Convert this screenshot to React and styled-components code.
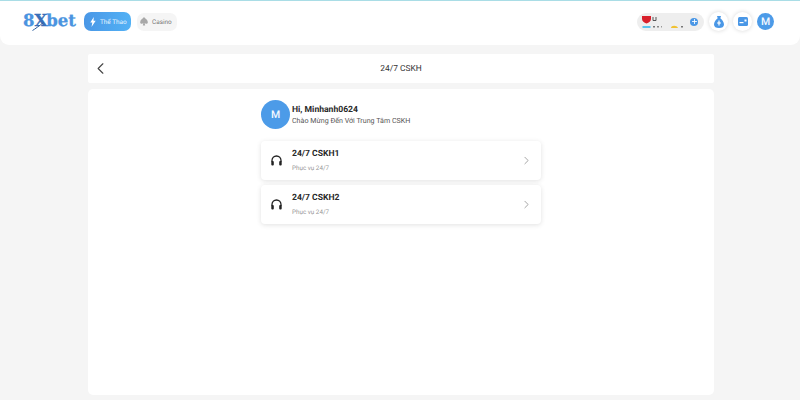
import React from "react";
import styled, { createGlobalStyle } from "styled-components";
import { ChevronLeft, ChevronRight, Plus } from "lucide-react";

const Global = createGlobalStyle`
  html, body { margin: 0; padding: 0; background: #f5f5f5; }
  body { font-family: Roboto, "Liberation Sans", Arial, sans-serif; color: #222; text-rendering: geometricPrecision; }
  * { box-sizing: border-box; }
`;
const Page = styled.div`
  width: 800px; height: 400px; overflow: hidden; display: flex; flex-direction: column;
`;
const Header = styled.header`
  height: 45px; flex: none; background: #fff; border-top: 1px solid #a9dde6;
  border-radius: 0 0 9px 9px; display: flex; align-items: center; justify-content: space-between;
  padding: 0 26px 3px 23px;
`;
const Left = styled.div`display: flex; align-items: center;`;
const Right = styled.div`display: flex; align-items: center; gap: 5px;`;
const Logo = styled.div`
  font-family: "DejaVu Serif", serif; font-weight: 700; font-size: 16.5px;
  -webkit-text-stroke: 0.3px currentColor;
  color: #4a94e0; width: 61px; display: flex; align-items: center; line-height: 1; position: relative;
`;
const LogoX = styled.span`color: #3a6fb8; font-size: 16.5px; margin: 0 -1px 0 0;`;
const Swoosh = styled.svg`position: absolute; left: 9px; top: 9px;`;
const Tab = styled.div`
  display: flex; align-items: center; flex: none; font-size: 6.4px; border-radius: 7px;
  gap: ${p => (p.$active ? "4px" : "4px")};
  padding: ${p => (p.$active ? "0 0 0 6px" : "0 0 0 3px")};
  width: ${p => (p.$active ? "47px" : "40px")}; margin-right: 6px; height: ${p => (p.$active ? "19px" : "18px")};
  background: ${p => (p.$active ? "linear-gradient(90deg,#4a97e6,#52b1f5)" : "#f5f5f5")};
  color: ${p => (p.$active ? "#e6f4ff" : "#777")}; white-space: nowrap;
  svg { flex: none; }
`;
const Wallet = styled.div`
  width: 67px; height: 18px; border-radius: 9px; background: #eeeeee;
  display: flex; align-items: center; justify-content: space-between; padding: 0 6px 0 5px;
`;
const CircleBtn = styled.div`
  width: 19px; height: 19px; border-radius: 50%; background: #fff; box-shadow: 0 0 4px rgba(0,0,0,.16);
  display: flex; align-items: center; justify-content: center;
`;
const PlusBtn = styled.div`
  width: 8px; height: 8px; border-radius: 50%; background: #4a97e6; color: #fff;
  display: flex; align-items: center; justify-content: center;
`;
const Avatar = styled.div`
  width: ${p => p.$size}px; height: ${p => p.$size}px; border-radius: 50%; background: #4c9be8; color: #f2f8ff;
  display: flex; align-items: center; justify-content: center; font-size: ${p => p.$font}px; font-weight: 500; flex: none;
`;
const Main = styled.main`
  width: 626px; margin: 9px auto 0 88px; display: flex; flex-direction: column; gap: 6px;
`;
const TitleBar = styled.div`
  height: 29px; background: #fff; border-radius: 2px; display: flex; align-items: center; justify-content: center;
  font-size: 8.4px; color: #333; position: relative;
`;
const Back = styled.div`position: absolute; left: 3px; top: 5px; color: #444; display: flex;`;
const Panel = styled.section`
  height: 306px; background: #fff; border-radius: 5px; padding: 11px 0 0 173px;
  display: flex; flex-direction: column;
`;
const Greeting = styled.div`display: flex; align-items: center; gap: 2px; margin-bottom: 12px;`;
const GreetText = styled.div`display: flex; flex-direction: column; gap: 0;`;
const Hello = styled.div`font-size: 8.6px; font-weight: 700; color: #2a2a2a; line-height: 11px;`;
const Sub = styled.div`font-size: 7.1px; color: #555; line-height: 9px;`;
const List = styled.div`display: flex; flex-direction: column; gap: 5px; width: 280px;`;
const Row = styled.div`
  height: 39px; background: #fff; border-radius: 4px; box-shadow: 0 1px 5px rgba(0,0,0,.12);
  display: flex; align-items: center; padding: 0 8px 0 10px; color: #222;
`;
const RowText = styled.div`flex: 1; display: flex; flex-direction: column; gap: 4px; margin-left: 10px;`;
const RowTitle = styled.div`font-size: 8.6px; font-weight: 700; color: #2a2a2a; line-height: 11px;`;
const RowSub = styled.div`font-size: 6.3px; color: #999; line-height: 8px;`;
const Chev = styled.div`color: #808080; display: flex;`;

const rows = ["24/7 CSKH1", "24/7 CSKH2"];

export default function App() {
  return (
    <Page>
      <Global />
      <Header>
        <Left>
          <Logo>
            8<LogoX>X</LogoX>bet
            <Swoosh width="12" height="9" viewBox="0 0 12 9"><path d="M.500 8.500C3 7 7 4 11.500.5" stroke="#2d5f9e" strokeWidth="1" fill="none" /></Swoosh>
          </Logo>
          <Tab $active>
            <svg width="6" height="10" viewBox="0 0 6 10"><path d="M3.800 0L.3 5.600h2L1.500 10 5.700 3.800H3.500z" fill="#fff" /></svg>
            Thể Thao
          </Tab>
          <Tab>
            <svg width="8" height="9" viewBox="0 0 10 11"><path d="M5 0C3.5 2 .2 3.5.2 6.3c0 2 2.6 2.7 4 1.2L3.5 10.500h3L5.800 7.500c1.400 1.500 4 .8 4-1.200C9.800 3.500 6.500 2 5 0z" fill="#a8a8a8" /></svg>
            Casino
          </Tab>
        </Left>
        <Right>
          <Wallet>
            <svg width="44" height="13" viewBox="0 0 44 13">
              <path d="M0 1h9v3c0 2-2 3.500-4.500 4.500C2 7.500 0 6 0 4z" fill="#d8202c" />
              <rect x="0.500" y="11" width="8" height="2" fill="#59c3ee" />
              <path d="M11 2v3.500h3V2" fill="none" stroke="#555" strokeWidth="1" />
              <rect x="11" y="11" width="2" height="1.500" fill="#777" />
              <rect x="15" y="11" width="2" height="1.500" fill="#888" />
              <rect x="19" y="11" width="1" height="1.500" fill="#999" />
              <path d="M29 13c0-3 6-3 7 0z" fill="#f1c232" />
              <rect x="39" y="11" width="2" height="1.500" fill="#777" />
            </svg>
            <PlusBtn><Plus size={7} strokeWidth={3} /></PlusBtn>
          </Wallet>
          <CircleBtn>
            <svg width="10" height="12" viewBox="0 0 10 12"><path d="M3 0h4L6.300 2.200c1.900 1.200 3.700 4 3.700 6.300C10 11 8 12 5 12S0 11 0 8.500c0-2.300 1.800-5.100 3.700-6.300z" fill="#4a97e6" /><rect x="4.400" y="4.500" width="1.200" height="5" fill="#fff" /><rect x="3.200" y="6.400" width="3.600" height="1.200" fill="#fff" /></svg>
          </CircleBtn>
          <CircleBtn>
            <svg width="10" height="9" viewBox="0 0 10 9"><rect width="10" height="9" rx="1.500" fill="#4a97e6" /><rect x="1.500" y="5" width="4" height="1.200" fill="#fff" /><rect x="6.500" y="2.500" width="2" height="2" fill="#fff" /></svg>
          </CircleBtn>
          <Avatar $size={17} $font={10.5}>M</Avatar>
        </Right>
      </Header>
      <Main>
        <TitleBar>
          <Back><ChevronLeft size={19} strokeWidth={1.4} /></Back>
          24/7 CSKH
        </TitleBar>
        <Panel>
          <Greeting>
            <Avatar $size={29} $font={10.5}>M</Avatar>
            <GreetText>
              <Hello>Hi, Minhanh0624</Hello>
              <Sub>Chào Mừng Đến Với Trung Tâm CSKH</Sub>
            </GreetText>
          </Greeting>
          <List>
            {rows.map(r => (
              <Row key={r}>
                <svg width="11" height="11" viewBox="0 0 11 11">
                  <path d="M1 7V5.500a4.500 4.500 0 0 1 9 0V7" fill="none" stroke="#222" strokeWidth="1.300" />
                  <rect x="0.300" y="6" width="2.500" height="4.500" rx="1" fill="#222" />
                  <rect x="8.200" y="6" width="2.500" height="4.500" rx="1" fill="#222" />
                </svg>
                <RowText>
                  <RowTitle>{r}</RowTitle>
                  <RowSub>Phục vụ 24/7</RowSub>
                </RowText>
                <Chev><ChevronRight size={13} strokeWidth={1.3} /></Chev>
              </Row>
            ))}
          </List>
        </Panel>
      </Main>
    </Page>
  );
}
